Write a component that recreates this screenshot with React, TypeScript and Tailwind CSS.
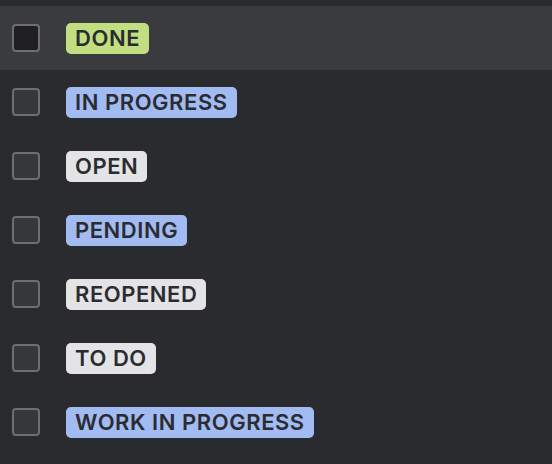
const rows = [
  { label: "DONE", color: "bg-[#c1df80]", active: true },
  { label: "IN PROGRESS", color: "bg-[#a2bbf3]" },
  { label: "OPEN", color: "bg-[#e4e4e6]" },
  { label: "PENDING", color: "bg-[#a2bbf3]" },
  { label: "REOPENED", color: "bg-[#e4e4e6]" },
  { label: "TO DO", color: "bg-[#e4e4e6]" },
  { label: "WORK IN PROGRESS", color: "bg-[#a2bbf3]" },
];

export default function App() {
  return (
    <div className="w-[552px] h-[464px] bg-[#2a2b2f] pt-[6px] overflow-hidden" style={{ fontFamily: "Inter, 'Noto Sans', sans-serif" }}>
      {rows.map((row) => (
        <div
          key={row.label}
          className={`flex items-center h-16 pl-3 ${row.active ? "bg-[#3a3b3f]" : ""}`}
        >
          <div
            className={`w-7 h-7 rounded-[4px] border-2 border-[#6d6e72] ${row.active ? "bg-[#1f1f22]" : "bg-[#36373b]"}`}
          />
          <span
            className={`ml-[26px] h-[31px] px-[9px] rounded-[5px] flex items-center text-[22px] font-semibold tracking-[0.55px] text-[#2b2c30] leading-none ${row.color}`}
          >
            {row.label}
          </span>
        </div>
      ))}
    </div>
  );
}
